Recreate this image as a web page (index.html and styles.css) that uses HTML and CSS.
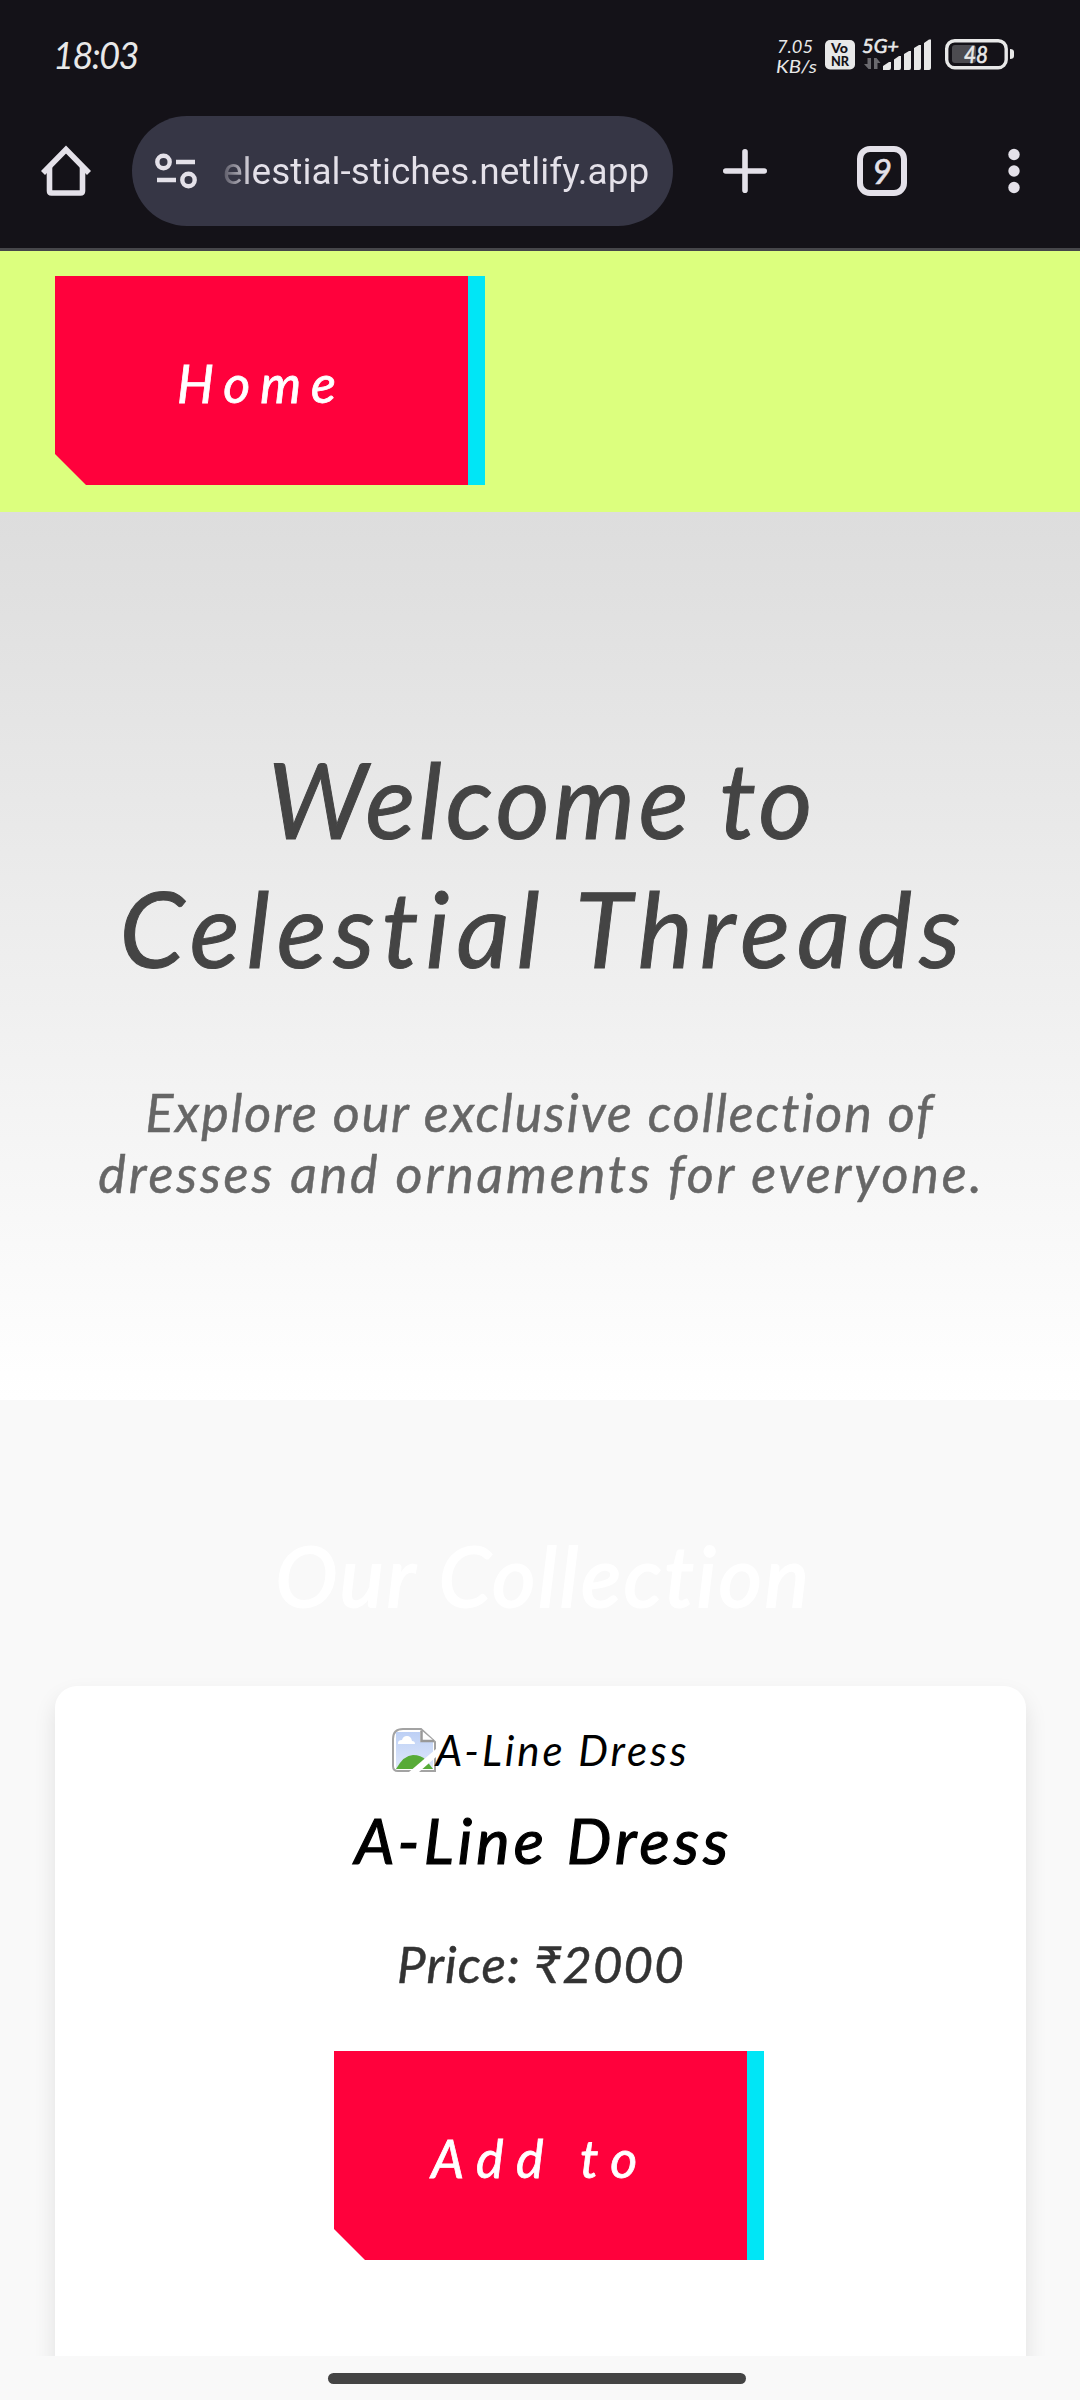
FILE: index.html
```html
<!DOCTYPE html>
<html lang="en">
<head>
<meta charset="utf-8">
<title>Celestial Threads</title>
<link rel="stylesheet" href="styles.css">
</head>
<body>
<div class="screen">
  <header class="chrome">
    <div class="status">
      <span class="clock">18:03</span>
      <svg class="status-icons" width="240" height="52" viewBox="776 26 240 52">
        <g class="ink script">
          <text x="777" y="53" font-size="17.500" textLength="36" lengthAdjust="spacingAndGlyphs">7.05</text>
          <text x="776" y="72.500" font-size="17.500" textLength="41" lengthAdjust="spacingAndGlyphs">KB/s</text>
          <text x="862" y="53" font-size="20" textLength="37" lengthAdjust="spacingAndGlyphs" stroke="#e8e8e8" stroke-width=".6">5G+</text>
        </g>
        <rect class="ink" x="825" y="40" width="30" height="29.500" rx="5"/>
        <g class="badge">
          <text x="831" y="53" font-size="12.500" textLength="17" lengthAdjust="spacingAndGlyphs">Vo</text>
          <text x="831" y="66" font-size="12.500" textLength="18" lengthAdjust="spacingAndGlyphs">NR</text>
        </g>
        <path fill="#6a696e" d="M871 58v11h-2.500l-4.500-5h3.500v-6zM874 69V58h2.500l4 5h-3v6z"/>
        <path class="ink" d="M883 70v-4l6-4h2v6q0 2-2 2zM894 70V59.500l5-3.500h2v12q0 2-2 2zM904 70V54l5-3h2v17q0 2-2 2zM914 70V48l5-3h2v23q0 2-2 2zM924 70V43l5-3.500h2V68q0 2-2 2z"/>
        <rect x="952" y="45" width="24" height="18" rx="3" fill="#4c4b50"/>
        <rect x="946.700" y="40.700" width="59.500" height="27" rx="8" fill="none" stroke="#e8e8e8" stroke-width="3.400"/>
        <path class="ink" d="M1010 49q4 0 4 3v4q0 3-4 3z"/>
        <text class="ink script" x="964" y="62.500" font-size="23" textLength="24" lengthAdjust="spacingAndGlyphs" stroke="#e8e8e8" stroke-width=".6">48</text>
      </svg>
    </div>
    <div class="toolbar">
      <svg class="home-icon" width="50" height="52" viewBox="41 145 50 52" fill="none" stroke="#e4e1e9" stroke-width="5.600" stroke-linejoin="round"><path d="M49.500 166v25q0 2 2 2h29q2 0 2-2v-25"/><path stroke-linejoin="miter" d="M43 173l23-23.500L89 173"/></svg>
      <div class="omnibox">
        <svg width="44" height="36" viewBox="154 153 44 36" fill="none" stroke="#e4e1e9" stroke-width="4.400"><circle cx="163.500" cy="162" r="6.200"/><circle cx="188.500" cy="180" r="6.200"/><path d="M176 162h19M157 180h19"/></svg>
        <span class="url">elestial-stiches.netlify.app</span>
      </div>
      <svg class="plus-icon" width="46" height="46" viewBox="0 0 46 46" fill="none" stroke="#e4e1e9" stroke-width="5.600" stroke-linecap="round"><path d="M23 3.800v38.400M3.800 23h38.400"/></svg>
      <span class="tabs">9</span>
      <svg class="menu-icon" width="12" height="46" viewBox="0 0 12 46" fill="#e4e1e9"><circle cx="6" cy="6.500" r="5.700"/><circle cx="6" cy="23" r="5.700"/><circle cx="6" cy="39.500" r="5.700"/></svg>
    </div>
  </header>
  <nav class="site-nav"><a class="btn"><span class="label-home">Home</span></a></nav>
  <section class="hero">
    <h1><span class="title-top">Welcome to</span><br><span class="title-name">Celestial Threads</span></h1>
    <p><span class="lead-top">Explore our exclusive collection of</span><br><span class="lead-end">dresses and ornaments for everyone.</span></p>
  </section>
  <section class="collection">
    <h2>Our Collection</h2>
    <article class="card">
      <div class="missing">
        <svg width="44" height="44" viewBox="0 0 44 44">
          <defs><linearGradient id="sky" x1="0" y1="0" x2="0" y2="1"><stop offset="0" stop-color="#bdd0f5"/><stop offset="1" stop-color="#dfe8fb"/></linearGradient></defs>
          <path d="M11 1H29L43 14V43H6Q1 43 1 38V11Q1 1 11 1z" fill="#fff" stroke="#a3a3a3" stroke-width="2"/>
          <path d="M4 4H28v10H41V41H4z" fill="url(#sky)"/>
          <path d="M6 15q0-3 4-3 1-4 5-4t5 5q3 0 3 3H6z" fill="#fff"/>
          <path d="M4 41q8-14 17-14 8 0 13 5l7 9z" fill="#57ab37"/>
          <path d="M29.500 2.500V13H42" fill="#fff" stroke="#999" stroke-width="2.500"/>
          <path d="M17 44L44 21v8L27 44z" fill="#fff"/>
        </svg><span>A-Line Dress</span>
      </div>
      <h3>A-Line Dress</h3>
      <p class="price">Price: ₹2000</p>
      <a class="btn"><span class="label-add">Add to</span></a>
    </article>
  </section>
  <footer class="gesture"><span></span></footer>
</div>
</body>
</html>
```
FILE: styles.css
```css
* { box-sizing: border-box; }
body { margin: 0; background: #f9f9f9; font-family: Lato, "Noto Sans", sans-serif; font-style: italic; }
h1, h2, h3, p { margin: 0; font-weight: 400; white-space: nowrap; }
.screen { width: 1080px; height: 2400px; display: flex; flex-direction: column; overflow: hidden; }

.chrome { height: 251px; flex: none; background: #141218; border-bottom: 3px solid #46464a; color: #e4e1e9; }
.status { height: 116px; padding: 26px 64px 0 53px; display: flex; justify-content: space-between; align-items: flex-start; }
.clock { padding-top: 8px; font-size: 36px; line-height: 42px; letter-spacing: -1.5px; color: #e8e8e8; }
.ink { fill: #e8e8e8; }
.script { font-family: Lato, sans-serif; }
.badge { font-family: Lato, sans-serif; font-style: normal; font-weight: 900; fill: #141218; }
.toolbar { height: 110px; padding: 0 60px 0 41px; display: flex; align-items: center; }
.omnibox { width: 541px; height: 110px; margin-left: 41px; padding-left: 22px; border-radius: 55px; background: #363645; display: flex; align-items: center; gap: 25px; }
.url { padding-top: 2px; font: 400 37px/48px Roboto, sans-serif; white-space: nowrap; background: linear-gradient(90deg, #5a5966, #e4e1e9 30px); -webkit-background-clip: text; background-clip: text; color: transparent; }
.plus-icon { margin-left: 49px; }
.tabs { width: 50px; height: 50px; margin-left: 89px; border: 6px solid #e4e1e9; border-radius: 13px; font-size: 34px; line-height: 37px; -webkit-text-stroke: .6px #e4e1e9; text-align: center; }
.menu-icon { margin-left: 101px; }

.site-nav { height: 261px; flex: none; padding: 25px 55px; background: #dcff7e; }
.btn { display: flex; width: 430px; height: 209px; padding: 4px 17px 0 0; justify-content: center; align-items: center; font-size: 52px; color: #fff; white-space: nowrap; -webkit-text-stroke: .8px #fff;
  background: linear-gradient(90deg, #ff013c 413px, #00e6f6 413px);
  clip-path: polygon(0 0, 100% 0, 100% 100%, 31px 100%, 0 178px); }
.label-home { letter-spacing: 10px; }
.label-add { letter-spacing: 12.4px; }

.hero { height: 888px; flex: none; padding-top: 222px; text-align: center; background: linear-gradient(#ddd, #fff); }
.hero h1 { font-size: 104px; line-height: 129px; color: #444; -webkit-text-stroke: 1px #444; }
.hero p { margin-top: 90px; font-size: 52px; line-height: 61px; color: #666; -webkit-text-stroke: .5px #666; }
.title-top { letter-spacing: 3.6px; margin-right: -4px; }
.title-name { letter-spacing: 6.9px; margin-right: -7px; }
.lead-top { letter-spacing: 1.9px; }
.lead-end { letter-spacing: 2.9px; margin-right: -3px; }

.collection { flex: 1; min-height: 0; overflow: hidden; padding: 125px 54px 0 55px; text-align: center; background: #f9f9f9; }
.collection h2 { padding-left: 6px; font-size: 83px; line-height: 100px; letter-spacing: 2.9px; color: #fff; -webkit-text-stroke: 2px #fff; }
.card { height: 900px; margin-top: 61px; padding-top: 42px; border-radius: 22px; background: #fff; box-shadow: 0 11px 22px rgba(0, 0, 0, .1); display: flex; flex-direction: column; align-items: center; color: #000; }
.missing { display: flex; height: 44px; font-size: 42px; line-height: 44px; letter-spacing: 2.9px; white-space: nowrap; }
.card h3 { margin-top: 30px; padding-left: 6px; font-size: 63px; line-height: 76px; letter-spacing: 4.1px; -webkit-text-stroke: 1.2px #000; }
.price { margin-top: 56px; padding-left: 1px; font-size: 51px; line-height: 60px; letter-spacing: 1.1px; color: #333; -webkit-text-stroke: .5px #333; }
.card .btn { margin: 57px 0 0 17px; }

.gesture { height: 44px; flex: none; background: #f9f9f9; display: flex; justify-content: center; padding: 17px 6px 0 0; }
.gesture span { width: 418px; height: 11px; border-radius: 6px; background: #444; }
```
